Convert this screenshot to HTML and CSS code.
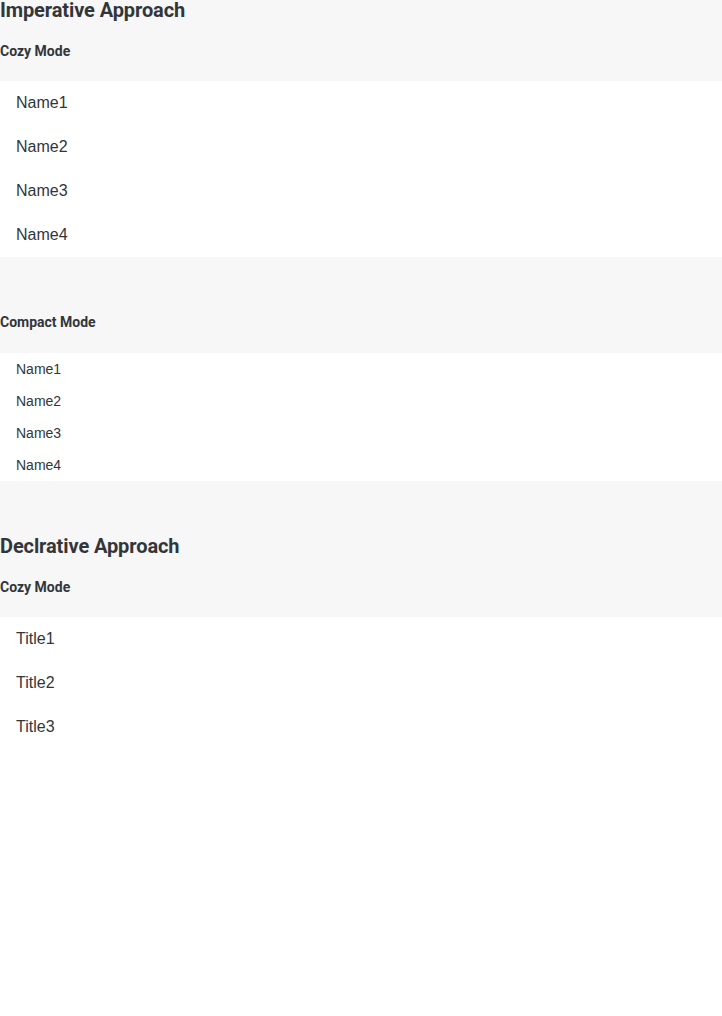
FILE: index.html
```html
<!DOCTYPE html>
<html>
<head>
<meta charset="utf-8">
<link rel="stylesheet" href="styles.css">
</head>
<body>
<div class="page">
  <h2 class="title">Imperative Approach</h2>
  <h4 class="sub">Cozy Mode</h4>
  <ul class="list cozy">
    <li>Name1</li>
    <li>Name2</li>
    <li>Name3</li>
    <li>Name4</li>
  </ul>
  <h4 class="sub sub-spaced">Compact Mode</h4>
  <ul class="list compact">
    <li>Name1</li>
    <li>Name2</li>
    <li>Name3</li>
    <li>Name4</li>
  </ul>
  <h2 class="title title-spaced">Declrative Approach</h2>
  <h4 class="sub">Cozy Mode</h4>
  <ul class="list cozy">
    <li>Title1</li>
    <li>Title2</li>
    <li>Title3</li>
  </ul>
</div>
</body>
</html>
```
FILE: styles.css
```css
html, body {
  margin: 0;
  padding: 0;
  background: #ffffff;
}
body {
  font-family: "Liberation Sans", Arial, sans-serif;
  color: #32363a;
}
.page {
  background: #f7f7f7;
  display: flex;
  flex-direction: column;
}
.title {
  margin: 0;
  font-family: Roboto, "Liberation Sans", sans-serif;
  font-size: 20px;
  line-height: 20px;
  font-weight: 700;
  letter-spacing: -0.1px;
  color: #32363a;
}
.title-spaced {
  margin-top: 55px;
}
.sub {
  margin: 23px 0 22px 0;
  font-family: Roboto, "Liberation Sans", sans-serif;
  font-size: 14px;
  line-height: 16px;
  font-weight: 700;
  color: #32363a;
}
.sub-spaced {
  margin-top: 57px;
  margin-bottom: 23px;
}
.list {
  list-style: none;
  margin: 0;
  padding: 0;
  background: #ffffff;
}
.list li {
  padding-left: 16px;
  color: #32363a;
}
.cozy li {
  height: 44px;
  line-height: 44px;
  font-size: 16px;
}
.compact li {
  height: 32px;
  line-height: 32px;
  font-size: 14px;
}
```
